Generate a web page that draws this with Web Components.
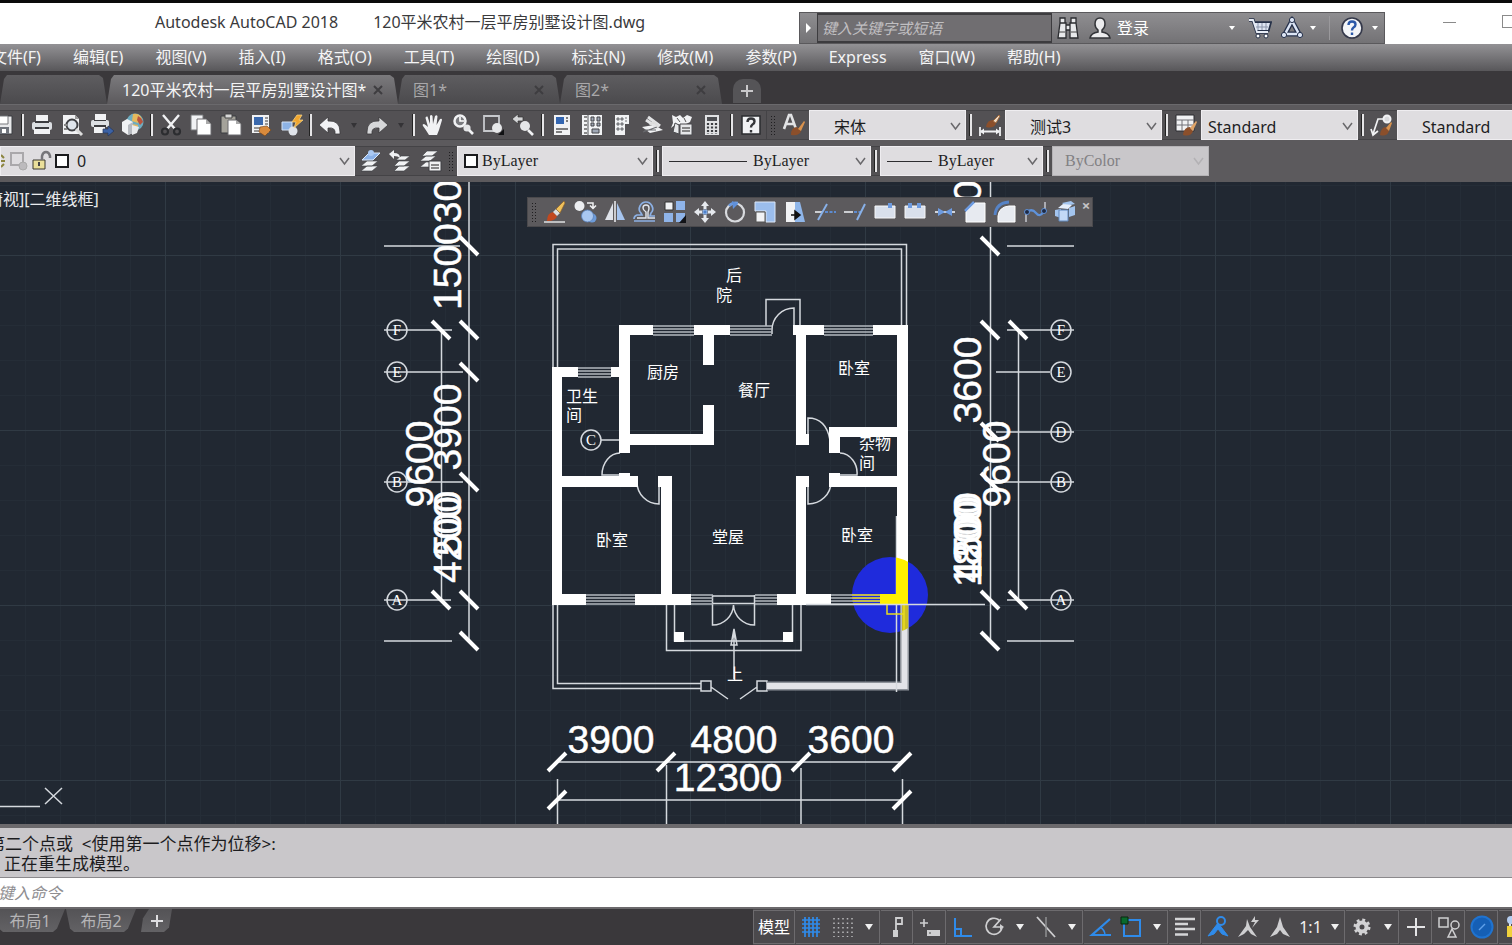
<!DOCTYPE html>
<html lang="zh-CN">
<head>
<meta charset="utf-8">
<title>Autodesk AutoCAD 2018</title>
<style>
  html, body { margin: 0; height: 100%; }
  body { font: 16px/20px "Noto Sans", "Noto Sans CJK SC", sans-serif; background: #5c5a5d; color: #f2f2f2; overflow: hidden; }
  .first style-select { padding-top: 3px; }
</style>
</head>
<body>
<cad-app>
  <title-bar slot="top" product="Autodesk AutoCAD 2018" file="120平米农村一层平房别墅设计图.dwg"></title-bar>
  <menu-bar slot="top" items="文件(F)|编辑(E)|视图(V)|插入(I)|格式(O)|工具(T)|绘图(D)|标注(N)|修改(M)|参数(P)|Express|窗口(W)|帮助(H)"></menu-bar>
  <doc-tabs slot="top"></doc-tabs>
  <tool-row slot="top" class="first">
    <tool-group class="std" tools="save | print preview publish globe | cut copy paste match paint | undo &gt; redo &gt; | hand zoom zoomwin zoomprev | props dcenter palettes sheet markup calc | help"></tool-group>
    <tool-group grip tools="textstyle"></tool-group>
    <style-select label="文字样式" value="宋体" indent="24"></style-select>
    <tool-group tools="| dimstyle"></tool-group>
    <style-select label="标注样式" value="测试3" indent="24"></style-select>
    <tool-group tools="| tablestyle"></tool-group>
    <style-select label="表格样式" value="Standard" indent="6"></style-select>
    <tool-group tools="| leader"></tool-group>
    <style-select label="多重引线样式" value="Standard" indent="24"></style-select>
  </tool-row>
  <tool-row slot="top" class="second">
    <style-select label="图层" value="0" kind="layer" indent="8"></style-select>
    <tool-group tools="layers layerprev layerstate"></tool-group>
    <tool-group grip tools=""></tool-group>
    <style-select label="颜色" value="ByLayer" kind="color" indent="4" serif></style-select>
    <tool-group tools="|"></tool-group>
    <style-select label="线型" value="ByLayer" kind="ltype" indent="6" serif></style-select>
    <tool-group tools="|"></tool-group>
    <style-select label="线宽" value="ByLayer" kind="lweight" indent="6" serif></style-select>
    <tool-group tools="|"></tool-group>
    <style-select label="打印样式" value="ByColor" kind="plot" indent="12" serif off></style-select>
  </tool-row>
  <drawing-canvas>
    <tool-group class="float" grip closable tools="erase duplicate mirror offset array move rotate scale stretch trim extend breakat break join chamfer fillet blend explode"></tool-group>
  </drawing-canvas>
  <command-panel slot="bottom"></command-panel>
  <bottom-bar slot="bottom"></bottom-bar>
</cad-app>

<script>
const W = '#f1f2f4', G = '#c6c8cc', D = '#3b3c40';
const ICONS = {
  save: `<path d="M2 3h19v18H2z" fill="#e8e9eb" stroke="${D}"/><path d="M6 3h11v8H6z" fill="#fff" stroke="#77787c"/><path d="M5 14h13v7H5z" fill="#70747c"/><path d="M11 16h4v4h-4z" fill="#fff"/>`,
  print: `<path d="M6 2h12v7H6z" fill="${W}"/><rect x="2" y="9" width="20" height="8" rx="2" fill="#dcdfe3"/><path d="M5 8h14v2H5zM5 14h14v2H5z" fill="${D}"/><path d="M4 16h16v5H4z" fill="${W}"/>`,
  preview: `<path d="M3 2h12l4 4v15H3z" fill="${W}"/><path d="M15 2v4h4z" fill="#999"/><circle cx="12" cy="12" r="5.500" fill="#dfe5ec" stroke="#3f4044" stroke-width="2"/><path d="M16 16l6 6" stroke="#ddd" stroke-width="3"/><path d="M4 11h3v2H4zM4 15h3v2H4z" fill="#888"/>`,
  publish: `<path d="M5 1h11v6H5z" fill="${W}"/><rect x="1" y="7" width="18" height="7" rx="2" fill="#dcdfe3"/><path d="M4 7h12v1H4zM4 12h12v2H4z" fill="${D}"/><path d="M4 14h11v6H4z" fill="${W}"/><path d="M13 16h5v-3l6 5-6 5v-3h-5z" fill="#3c62a5" stroke="#26365a" stroke-width=".7"/>`,
  globe: `<circle cx="15" cy="9" r="8.500" fill="#6dacc0"/><path d="M13 1q7-1 9 5l-4 4-6-2zM12 11l6 1-1 6-5-1z" fill="#e5b95d"/><path d="M18 3q4 2 5 6l-3 3-3-5z" fill="#b9543e"/><path d="M2 9l5-3 6 3v11l-5 2-6-4z" fill="${W}"/><path d="M8 12l5-3v11l-5 2z" fill="#b7bac0"/><path d="M12 12l7 2-2 6-5 2z" fill="#e9eaec"/>`,
  cut: `<path d="M4 2l12 14M20 2L8 16" stroke="${W}" stroke-width="2.400"/><circle cx="6" cy="18.500" r="3" fill="none" stroke="#2c2d30" stroke-width="2.200"/><circle cx="18" cy="18.500" r="3" fill="none" stroke="#2c2d30" stroke-width="2.200"/>`,
  copy: `<path d="M2 2h12v15H2z" fill="${W}" stroke="#77787b"/><path d="M8 6h9l5 5v11H8z" fill="#fff" stroke="#6a6b6e"/><path d="M17 6v5h5z" fill="#aaa"/>`,
  paste: `<path d="M2 3h15v17H2z" fill="#a4a29a" stroke="${D}"/><path d="M6 1h7v4H6z" fill="#d8d8d8" stroke="#444"/><path d="M9 7h8l5 4v11H9z" fill="#fff" stroke="#6a6b6e"/><path d="M17 7v4h5z" fill="#aaa"/>`,
  match: `<path d="M3 2h17v18H3z" fill="${W}"/><path d="M5 4h9v8H5z" fill="#3b69ad"/><path d="M16 5h3M16 8h3M16 11h3M5 15h7M5 18h5" stroke="#777" stroke-width="1.500"/><path d="M11 14l7-1 4 4-2 2-4 4-6-4z" fill="#d98a3c" stroke="#6f4015" stroke-width=".6"/>`,
  paint: `<path d="M3 9h10v8H3z" fill="#8db3e6" stroke="#d5e3f5"/><circle cx="14" cy="18" r="4.500" fill="#dfe3ea"/><path d="M18 2h5l-3 5h4l-9 8 2-6h-4z" fill="#f0a62f" stroke="#fbd889" stroke-width=".7"/>`,
  undo: `<path d="M10 4v4q12-1 12 11v2h-5q1-7-7-6v5l-9-8z" fill="${W}" stroke="#3c3b3e" stroke-width=".8"/>`,
  redo: `<path d="M14 4v4Q2 7 2 19v2h5q-1-7 7-6v5l9-8z" fill="#d6d7d9" stroke="#3c3b3e" stroke-width=".8"/>`,
  hand: `<path d="M8 22q-3-5-6-9-1-2 1-2 2 1 4 3L4.500 5q0-2 2-1.500L9 11 9 3q1-2 2.500 0L12 11l2-8q2-1.500 2.500.500L15.500 12 19 6q2-1 2 1l-3 10-2 5z" fill="${W}"/>`,
  zoom: `<circle cx="9" cy="8" r="5.500" fill="#7a7b7f" stroke="${W}" stroke-width="2.500"/><path d="M9 4v4h4" stroke="#fff" stroke-width="1.600" fill="none"/><circle cx="16" cy="15" r="3.600" fill="#e4e5e7"/><path d="M18 17l4 4" stroke="${W}" stroke-width="2.600"/>`,
  zoomwin: `<path d="M3 3h15v15H3z" fill="none" stroke="${G}" stroke-width="1.800"/><circle cx="16" cy="15" r="5" fill="#e6e7e9"/><path d="M17 22h6v-6z" fill="#101113"/>`,
  zoomprev: `<path d="M1 6l6-5v3h5v4H7v3z" fill="#d5d6d8" stroke="#333" stroke-width=".7"/><circle cx="14" cy="13" r="5" fill="#e6e7e9"/><path d="M17 17l5 5" stroke="${W}" stroke-width="2.600"/>`,
  props: `<path d="M4 2h16v20H4z" fill="${W}"/><path d="M6 4h8v7H6z" fill="#3466b1"/><path d="M16 5h2M16 8h2M6 16h12M6 19h6" stroke="#555" stroke-width="1.500"/>`,
  dcenter: `<path d="M2 2h20v20H2z" fill="${W}"/><path d="M4 4h3M4 8h3M4 12h3M4 16h3M4 20h3" stroke="#666" stroke-width="1.600"/><path d="M8 2v20" stroke="#55565a"/><g fill="#9fa7b5" stroke="#424347"><path d="M11 4h3v4h-3zM17 4h3v4h-3zM11 10h3v3h-3zM17 10h3v3h-3zM12 16h7v4h-7z"/></g>`,
  palettes: `<path d="M5 2h14v9h-4v11H5z" fill="${W}"/><path d="M15 5h2M15 8h2M7 5h2v2H7zM11 5h2v2h-2zM7 10h2v2H7zM11 10h2v2h-2zM7 15h2v2H7zM11 15h2v2h-2z" stroke="#6f7074" fill="#a9abb0"/>`,
  sheet: `<path d="M2 14l12-2 9 5-13 3z" fill="${W}"/><path d="M6 7l12 8M8 4l12 9" stroke="#e3e4e6" stroke-width="3"/><path d="M3 19l14-5M4 17h12" stroke="#696a6e" stroke-width="1.200"/><path d="M10 12q4-6 8 2" fill="none" stroke="#ddd" stroke-width="2"/>`,
  markup: `<path d="M2 2l4 2 4-2 3 3 4-3 5 2-2 5-6 3-8-1-5 4 2-5z" fill="${W}"/><path d="M5 10l-2 9 6 2v-9zM10 11h12v11H10z" fill="#e6e7e9" stroke="#4a4b4f"/><path d="M12 15h8M12 18h8" stroke="#666" stroke-width="1.500"/><path d="M7 5l3 4M14 5l2 4" stroke="#555"/>`,
  calc: `<path d="M5 2h14v20H5z" fill="#e1e2e4"/><path d="M7 4h10v4H7z" fill="#4d4e52"/><path d="M8 10v11M12 10v11M16 10v11" stroke="#3d3e42" stroke-width="2.200" stroke-dasharray="2 1.500"/>`,
  help: `<path d="M3 3h18v18H3z" fill="${W}" stroke="#2b2c2f" stroke-width="1.500"/><path d="M8.500 9q0-3.500 3.500-3.500t3.500 3q0 2-2 3-1.500 1-1.500 3M12 17v2.500" fill="none" stroke="#35363a" stroke-width="2.400"/>`,
  textstyle: `<path d="M2 16L7 2h2l5 14M4.500 11h8" fill="none" stroke="#e2e3e5" stroke-width="2.600"/><path d="M9 22q0-8 6-8l4 4q-1 5-10 4z" fill="#8b4f2b"/><path d="M16 16l6-8 1 1-4 9z" fill="#d9924d"/>`,
  dimstyle: `<path d="M2 14v9M22 14v9M3 18.500h18" stroke="${W}" stroke-width="1.800"/><path d="M2 18.500l4-3v6zM22 18.500l-4-3v6z" fill="${W}"/><path d="M8 14q1-7 7-7l3 4q-3 5-10 3z" fill="#8b4f2b"/><path d="M15 8l6-6 1 1-4 7z" fill="#f0dcc5" stroke="#a0693c"/>`,
  tablestyle: `<path d="M2 2h18v16H2z" fill="${W}" stroke="#2c2d30"/><path d="M2 7h18M2 12h18M8 7v11M14 7v11" stroke="#707176"/><path d="M9 22q1-8 7-8l3 4q-2 6-10 4z" fill="#8b4f2b"/><path d="M16 15l6-7 1 1-4 9z" fill="#e0a468"/>`,
  leader: `<path d="M13 6L8 6 3 21M1 16l2 6 5-4" fill="none" stroke="${W}" stroke-width="1.700"/><path d="M10 22q1-8 6-8l3 4q-2 6-9 4z" fill="#8b4f2b"/><path d="M16 15l5-6 1 1-3 8z" fill="#d9924d"/><circle cx="17" cy="6" r="3.500" fill="#d9dadd" stroke="${W}" stroke-width="2"/>`,
  layers: `<path d="M3 22h11l6-5H9zM3 17h11l6-5H9z" fill="${W}" stroke="#3e3f43" stroke-width=".6"/><path d="M4 11h11l7-7H11z" fill="#8ab1e8" stroke="#dce9fb"/><circle cx="13" cy="4" r="3" fill="#a9c8f3"/>`,
  layerprev: `<path d="M6 22h10l6-5H11zM6 17h10l6-5H11zM8 11h9l5-4h-9z" fill="${W}" stroke="#3e3f43" stroke-width=".6"/><path d="M1 5l5-4v3q6 0 6 5-2-2-6-2v3z" fill="${W}"/>`,
  layerstate: `<path d="M2 18h9l6-5H8zM2 12h10l6-5H8zM4 7h10l6-5H9z" fill="${W}" stroke="#3e3f43" stroke-width=".6"/><path d="M11 12h12v10H11z" fill="${W}" stroke="#3e3f43"/><path d="M13 16h8M13 19h8" stroke="#666" stroke-width="1.500"/>`,
  erase: `<path d="M1 22h21" stroke="#d8d9db" stroke-width="1.600"/><path d="M4 21q0-8 6-9l4 4q-1 5-10 5z" fill="#c1481f"/><path d="M10 12l3-3 4 4-3 3z" fill="#ddd"/><path d="M13 9l8-8 1 2-5 10z" fill="#f0c15c" stroke="#8b5d20" stroke-width=".6"/>`,
  duplicate: `<circle cx="6.500" cy="6" r="5" fill="#eceef1"/><circle cx="19" cy="18" r="4.500" fill="#6d9bd9"/><circle cx="14.500" cy="16" r="6" fill="#a9c7f0" stroke="#5a83bd" stroke-width=".8"/><path d="M14 3h6v5M17 5.500l3 3 3-3" fill="none" stroke="${W}" stroke-width="1.500"/>`,
  mirror: `<path d="M10 3v17H2z" fill="#dfe3ea"/><path d="M14 3v17h8z" fill="#a7c5ef"/><path d="M12 1v21" stroke="#f1f2f4" stroke-width="1.500"/>`,
  offset: `<path d="M1 21h21M22 16h-5l1-3q3-3 1-7-2-4-6-4T7 6q-2 4 1 7l1 2H4q-3 1-3 4" fill="none" stroke="#8cb0e4" stroke-width="1.700"/><path d="M4 18h9v-6q-3-2-3-4 0-3 3-3t3 3q0 2-1 4v6h7" fill="none" stroke="#e2e7ef" stroke-width="1.400"/>`,
  array: `<path d="M2 2h8v8H2z" fill="${W}" stroke="#333"/><path d="M13 1h9v9h-9zM1 13h9v9H1zM13 13h9v9h-9z" fill="#8fb4e9"/><path d="M16 23h7v-8z" fill="#121317"/>`,
  move: `<path d="M12 1l4 5h-2.500v3h-3V6H8zM12 23l4-5h-2.500v-3h-3v3H8zM1 12l5-4v2.500h3v3H6V16zM23 12l-5-4v2.500h-3v3h3V16z" fill="#e6e9ee"/><path d="M10 10h4v4h-4z" fill="#4f83cd" stroke="#9fc0ee"/>`,
  rotate: `<circle cx="12" cy="12.500" r="9" fill="none" stroke="#d9dbdf" stroke-width="2.200"/><path d="M6 6q3-4 9-3" stroke="#6c9ade" stroke-width="2.500" fill="none"/><path d="M9 1l6 3-5 5z" fill="#5f90da"/>`,
  scale: `<path d="M2 2h20v20H13V11H2z" fill="#9bbdec" stroke="#dbe6f6"/><path d="M3 12h9v10H3z" fill="${W}" stroke="#555"/>`,
  stretch: `<path d="M12 2h5l5 20H12z" fill="#8fb6ea"/><path d="M3 2h9v20H3z" fill="${W}"/><path d="M8 15h7M12 11l5 4-5 4z" fill="#111" stroke="#111" stroke-width="1.500"/>`,
  trim: `<path d="M2 12h7" stroke="#d9dbdf" stroke-width="1.800"/><path d="M12 12h11" stroke="#5d8bd0" stroke-width="1.800" stroke-dasharray="3 1.500"/><path d="M5 20L14 4" stroke="#88b0e8" stroke-width="2"/>`,
  extend: `<path d="M1 12h9" stroke="#d9dbdf" stroke-width="1.800"/><path d="M11 12h7" stroke="#5d8bd0" stroke-width="1.800" stroke-dasharray="3 1.500"/><path d="M14 20l8-16" stroke="#88b0e8" stroke-width="2"/>`,
  breakat: `<path d="M2 6h20v12H2z" fill="#d9e0ec" stroke="#f6f7f9"/><path d="M15 3h4v5h-4z" fill="#6d9be0"/>`,
  break: `<path d="M2 6h20v12H2z" fill="#d9e0ec" stroke="#f6f7f9"/><path d="M5 3h4v5H5zM14 3h4v5h-4z" fill="#6d9be0"/>`,
  join: `<path d="M2 12h20" stroke="#dfe3ea" stroke-width="1.800"/><path d="M5 8l7 4-7 4zM19 8l-7 4 7 4z" fill="#6d9be0"/>`,
  chamfer: `<path d="M3 22V12l9-9h10v19z" fill="#e7eaf0" stroke="#fff"/><path d="M2 11L11 2" stroke="#6d9be0" stroke-width="2.500"/>`,
  fillet: `<path d="M5 22V16q1-9 11-10h6v16z" fill="#e7eaf0" stroke="#fff"/><path d="M2 15Q3 3 16 2" fill="none" stroke="#5683c6" stroke-width="2.800"/>`,
  blend: `<path d="M3 22V13M22 9V2" stroke="#c5c8ce" stroke-width="1.500"/><path d="M4 12q5-4 9 1t8-2" fill="none" stroke="#5f92da" stroke-width="2.200"/><circle cx="4" cy="12" r="2.500" fill="#1f2a44" stroke="#5f92da"/><circle cx="21" cy="11" r="2.500" fill="#1f2a44" stroke="#5f92da"/>`,
  explode: `<path d="M2 10l6-1v9l-6-2zM16 8l6-2v9l-6 2zM9 3l9-2 4 3-9 2z" fill="#a3c4ee"/><path d="M6 10h9v11H6z" fill="#c3d9f6" stroke="#6189bf"/><path d="M5 8l5-4 9 1-4 4z" fill="#e5eefb"/>`,
  binoculars: `<g fill="#e8e9eb" stroke="#2b2c30" stroke-width="1.300"><path d="M2 22l2-15h6v15zM14 22V7h6l2 15zM4 2h5v5H4zM15 2h5v5h-5zM10 9h4v5h-4z"/></g><path d="M3 16h6M15 16h6" stroke="#444"/>`,
  person: `<path d="M12 2q5 0 5 6 0 4-3 6v2q7 1 8 6H2q1-5 8-6v-2q-3-2-3-6 0-6 5-6z" fill="#ececee" stroke="#333438" stroke-width="1.500"/>`,
  cart: `<path d="M1 4h4l4 12h11M6 7h16l-2 7H9" fill="none" stroke="#273249" stroke-width="3.500"/><path d="M6 7h16l-2 7H9z" fill="#dfe6f3"/><path d="M1 4h4l4 12h11" fill="none" stroke="#e8edf6" stroke-width="1.800"/><path d="M10 7v7M14 7v7M18 7v7M8 11h12" stroke="#8b95aa"/><circle cx="10" cy="20" r="2" fill="#fff" stroke="#273249"/><circle cx="18" cy="20" r="2" fill="#fff" stroke="#273249"/>`,
  cloud: `<path d="M12 5L5 18h14z" fill="none" stroke="#26314b" stroke-width="5"/><path d="M12 5L5 18h14z" fill="none" stroke="#dce5f5" stroke-width="2.500"/><circle cx="12" cy="4" r="2.600" fill="#dce5f5" stroke="#26314b"/><circle cx="4" cy="19" r="2.600" fill="#dce5f5" stroke="#26314b"/><circle cx="20" cy="19" r="2.600" fill="#dce5f5" stroke="#26314b"/>`,
  question: `<circle cx="12" cy="12" r="10" fill="#f3f5f8" stroke="#34384a" stroke-width="1.600"/><path d="M8.500 9q0-3.500 3.500-3.500t3.500 3q0 2-2 3-1.500 1-1.500 3M12 16.500v2.500" fill="none" stroke="#2b58a8" stroke-width="2.400"/>`,
  sgrid: `<path d="M5 2v20M9 2v20M13 2v20M17 2v20M2 5h18M2 9h18M2 13h18M2 17h18" stroke="#2f8bea" stroke-width="1.700"/>`,
  ssnap: `<path d="M3 3v19M7.500 3v19M12 3v19M16.500 3v19M21 3v19" stroke="#b9b9bb" stroke-width="1.500" stroke-dasharray="1.500 3"/>`,
  sinfer: `<path d="M11 20V3h6v6h-6" fill="none" stroke="#cfcfd1" stroke-width="1.800"/><path d="M8 15h5v7H8z" fill="#cfcfd1"/>`,
  sdyn: `<path d="M2 8h8M6 4v8" stroke="#cfcfd1" stroke-width="1.600"/><path d="M9 15h13v6H9z" fill="#cfcfd1"/><path d="M12 17v2" stroke="#444"/>`,
  sortho: `<path d="M4 3v18h17M4 14h6v7" fill="none" stroke="#2f8bea" stroke-width="2"/>`,
  spolar: `<path d="M17 5a8 8 0 1 0 3 7H12l7-8" fill="none" stroke="#cfcfd1" stroke-width="1.700"/><path d="M18 9l4 3-4 3z" fill="#cfcfd1"/>`,
  siso: `<path d="M3 2l18 20" stroke="#cfcfd1" stroke-width="1.800"/><path d="M12 2v20" stroke="#8f9092" stroke-width="1.500"/>`,
  strack: `<path d="M22 4L4 20h19" fill="none" stroke="#2f8bea" stroke-width="2.200"/><path d="M12 12q5 3 5 8" stroke="#2f8bea" fill="none" stroke-width="1.500"/>`,
  sosnap: `<path d="M5 5h16v16H5z" fill="none" stroke="#2f8bea" stroke-width="2"/><path d="M2 2h7v7H2z" fill="#0a6a2c" stroke="#06280f"/>`,
  sweight: `<path d="M2 4h20M2 9h13M2 14h20M2 19.500h13" stroke="#d5d5d7" stroke-width="2.400"/>`,
  sann1: `<path d="M12 8l10 13-6-2-4-5-4 5-6 2z" fill="#2f8bea" stroke="#2f8bea"/><circle cx="15" cy="6" r="4" fill="none" stroke="#2f8bea" stroke-width="2"/>`,
  sann2: `<path d="M10 4l3 8 7 10-6-3-3-4-4 4-6 3 8-11z" fill="#cfcfd1"/><path d="M18 1l-4 6h4l-3 6 7-8h-4z" fill="#cfcfd1"/>`,
  sann3: `<path d="M12 2l3 10 7 10-7-3-3-4-3 4-7 3 7-10z" fill="#cfcfd1"/>`,
  sgear: `<circle cx="12" cy="12" r="4.500" fill="none" stroke="#d2d2d4" stroke-width="4"/><circle cx="12" cy="12" r="7" fill="none" stroke="#d2d2d4" stroke-width="3" stroke-dasharray="2.800 2.700"/>`,
  splus: `<path d="M12 3v18M3 12h18" stroke="#e4e4e6" stroke-width="2"/>`,
  sshapes: `<path d="M2 3h9v9H2zM11 22l4-8 4 8z" fill="none" stroke="#cfcfd1" stroke-width="1.500"/><circle cx="18" cy="10" r="4" fill="none" stroke="#cfcfd1" stroke-width="1.500"/>`,
  scirc: `<circle cx="12" cy="12" r="10.500" fill="#155fb5" stroke="#1f73d0" stroke-width="2"/><path d="M9 15l6-6" stroke="#5fa0ea" stroke-width="1.500"/>`,
  syellow: `<path d="M4 11h18v11H4z" fill="#f1d13b"/><path d="M7 11V6q5-6 9 0" fill="none" stroke="#e6e6e6" stroke-width="2"/><circle cx="8" cy="5" r="4" fill="#b5cdf0"/>`
};

function define(name, css, render) {
  customElements.define(name, class extends HTMLElement {
    constructor() { super(); this.attachShadow({ mode: 'open' }); }
    connectedCallback() {
      if (this.shadowRoot.childNodes.length) return;
      this.shadowRoot.innerHTML = `<style>:host,*{box-sizing:border-box}${css}</style>${render(this)}`;
    }
  });
}
const icon = n => `<cad-icon name="${n}"></cad-icon>`;

define('cad-icon', `:host{display:block;width:24px;height:24px;flex:none;pointer-events:none}svg{display:block;width:100%;height:100%}`,
  el => `<svg viewBox="0 0 24 24" aria-hidden="true">${ICONS[el.getAttribute('name')]}</svg>`);

define('cad-app', `
  :host{display:flex;flex-direction:column;height:100vh;min-height:480px;overflow:hidden;background:#5c5a5d}
  main{flex:1;min-height:0;display:flex}
  ::slotted(drawing-canvas){flex:1}`,
  () => `<slot name="top"></slot><main><slot></slot></main><slot name="bottom"></slot>`);

define('title-bar', `
  :host{display:flex;flex:none;height:44px;background:#fff;border-top:3px solid #0b0a0b;color:#3a3a3c;padding-left:155px;overflow:hidden}
  h1{font:inherit;margin:0;display:flex;gap:35px;white-space:nowrap;padding-top:9px}
  .info{margin:9px 0 0 auto;display:flex;align-items:center;width:586px;flex:none;height:32px;background:linear-gradient(#8f8e91,#737275);border:1px solid #5a595c;color:#fff}
  button{appearance:none;background:none;border:0;padding:0;font:inherit;color:inherit;display:flex;align-items:center}
  .tri{width:0;height:0;border:5px solid transparent;border-left-color:#fff;border-right:0;margin:0 6px}
  .dd{width:0;height:0;border:3px solid transparent;border-top:4px solid #fff;border-bottom:0}
  input{width:235px;height:30px;border:1px solid #3d3c3f;border-width:2px 1px;background:#706e71;font:italic 15px/20px "Noto Sans","Noto Sans CJK SC",sans-serif;padding:0 4px;color:#fff}
  input::placeholder{color:#c0bfc1;opacity:1}
  .win{width:127px;flex:none;display:flex;justify-content:flex-end;padding-top:12px}
  .min{width:13px;height:8px;border-bottom:1px solid #8a8a8a;margin-right:46px}
  .max{width:13px;height:13px;border:1px solid #8a8a8a;margin-right:-3px}`,
  el => `<h1><span>${el.getAttribute('product')}</span><span>${el.getAttribute('file')}</span></h1>
  <div class="info"><button aria-label="收拢"><span class="tri"></span></button><input aria-label="搜索" placeholder="键入关键字或短语">
   <button aria-label="搜索" style="margin-left:4px">${icon('binoculars')}</button>
   <button style="margin-left:8px;gap:5px;width:147px">${icon('person')}<span>登录</span><span class="dd" style="margin-left:auto"></span></button>
   <button aria-label="商店" style="margin-left:13px">${icon('cart')}</button>
   <button aria-label="A360" style="margin-left:8px;gap:6px;padding-right:13px;border-right:1px solid #9a999c">${icon('cloud')}<span class="dd"></span></button>
   <button aria-label="帮助" style="margin-left:10px;gap:8px">${icon('question')}<span class="dd"></span></button></div>
  <div class="win"><button class="min" aria-label="最小化"></button><button class="max" aria-label="最大化"></button></div>`);

define('menu-bar', `
  :host{display:block;flex:none;height:27px;background:linear-gradient(#939295,#58575a);overflow:hidden}
  nav{display:flex;gap:32px;margin-left:-9px;white-space:nowrap}
  a{color:#f4f4f5;text-decoration:none;line-height:27px;flex:none}`,
  el => `<nav>${el.getAttribute('items').split('|').map(t => `<a href="#">${t}</a>`).join('')}</nav>`);

define('doc-tabs', `
  :host{display:flex;flex:none;height:33px;background:#3a383b;padding-top:4px;overflow:hidden}
  button{appearance:none;border:0;font:inherit;color:#a9a8aa;background:linear-gradient(#5e5d60,#4b4a4d);height:29px;display:flex;align-items:center;text-align:left;padding:0 15px 0 15px;flex:none;width:162px;clip-path:polygon(7px 0,calc(100% - 8px) 0,calc(100% - 4px) 3px,100% 100%,0 100%,4px 4px)}
  .blank{width:107px}
  .on{width:291px;color:#f4f4f5;background:linear-gradient(#7b7a7d,#5c5a5d);padding-right:14px}
  svg{width:12px;height:12px;margin-left:auto;flex:none}
  span{white-space:nowrap}
  .plus{width:28px;height:24px;margin:4px 0 0 11px;padding:0 8px;border-radius:10px 10px 0 0;background:#555457;clip-path:none}
  .plus svg{margin:0}`,
  () => { const x = '<svg viewBox="0 0 12 12"><path d="M2 2l8 8M10 2l-8 8" stroke="#3e3d40" stroke-width="2"/></svg>';
    return `<button class="blank" aria-label="开始"></button><button class="on"><span>120平米农村一层平房别墅设计图*</span>${x}</button>
    <button><span>图1*</span>${x}</button><button><span>图2*</span>${x}</button>
    <button class="plus" aria-label="新图形"><svg viewBox="0 0 12 12"><path d="M6 0v12M0 6h12" stroke="#c9c8ca" stroke-width="2"/></svg></button>`; });

define('tool-row', `
  :host{display:flex;flex:none;align-items:stretch;overflow:hidden;height:36px;padding:5px 0 0;background:#5c5a5d;border-top:1px solid #6a696c}
  :host(.second){height:42px;padding:5px 0 6px;border-top-color:#5c5a5d}`,
  () => `<slot></slot>`);

define('tool-group', `
  :host{display:flex;flex:none;align-items:center;background:#535154;border:solid #444346;border-width:1px 0}
  :host(.std){margin-left:-12px;border-right-width:1px}
  :host(.float){position:absolute;left:calc(50% - 229px);top:15px;height:30px;background:#5c5a5d;border:1px solid #4a494c}
  .grip{width:5px;height:20px;margin:0 4px 0 3px;background:radial-gradient(circle,#1f1e20 1px,transparent 1px) 0 0/3px 3px}
  button{appearance:none;background:none;border:0;padding:0;width:30px;height:26px;display:grid;place-items:center;flex:none}
  :host(.std) .dd{width:17px}
  .dd i{border:3px solid transparent;border-top:5px solid #343336;border-bottom:0}
  .sep{width:9px;height:24px;display:grid;place-items:center}
  .sep i{width:3px;height:22px;background:#e6e5e7;border-left:1px solid #222;}
  .close{width:12px;align-self:start;font:700 15px/14px "Noto Sans",sans-serif;color:#c4c4c6;height:14px}`,
  el => (el.hasAttribute('grip') ? '<span class="grip"></span>' : '') +
    el.getAttribute('tools').split(/\s+/).filter(Boolean).map(t => t === '|' ? '<span class="sep"><i></i></span>'
      : t === '>' ? '<button class="dd" aria-label="更多"><i></i></button>'
      : `<button aria-label="${t}">${icon(t)}</button>`).join('') +
    (el.hasAttribute('closable') ? '<button class="close" aria-label="关闭">×</button>' : ''));

define('style-select', `
  :host{display:flex;flex:none;align-items:center;width:157px;background:#dfdde0;border:1px solid #efedf0;position:relative;color:#1d1d1f;overflow:hidden}
  :host([kind=layer]){width:355px}
  :host([kind=color]){width:196px}
  :host([kind=ltype]){width:209px}
  :host([kind=lweight]){width:163px}
  :host([off]){background:#c9c7ca;border-color:#b5b3b6;color:#828184}
  select{appearance:none;flex:1;min-width:0;height:100%;border:0;background:none;color:inherit;opacity:1;font:16px/20px "Noto Sans","Noto Sans CJK SC",sans-serif;padding:0 20px 0 var(--in)}
  :host([serif]) select{font-family:"Liberation Serif","Noto Sans CJK SC",serif}
  .chev{width:11px;height:9px;margin:0 4px 0 -15px;flex:none;pointer-events:none}
  .sw{width:14px;height:14px;border:2px solid #1b1b1d;background:#fff;flex:none}
  .ln{height:1px;background:#2d2d2f;flex:none;margin-left:6px}
  .pre{display:flex;flex:none}`,
  el => { const k = el.getAttribute('kind');
    const pre = { layer: `<svg class="pre" width="54" height="24" viewBox="0 0 54 24"><path d="M-4 12h8M0 6l3 3M0 18l3-3" stroke="#8c8540" stroke-width="2"/><path d="M10 4h12v12H10z" fill="none" stroke="#aaa8ab" stroke-width="2"/><circle cx="22" cy="17" r="4" fill="#bcbabd" stroke="#aaa"/><path d="M32 11h12v9H32z" fill="#eadf9a" stroke="#3b3830"/><path d="M41 11V7q1-4 4-4t4 4v2" fill="none" stroke="#77767a" stroke-width="2.500"/><path d="M38 13v4" stroke="#444" stroke-width="2"/></svg><span class="sw"></span>`,
      color: '<span class="sw" style="margin-left:6px"></span>', ltype: '<span class="ln" style="width:78px"></span>', lweight: '<span class="ln" style="width:45px"></span>' }[k] || '';
    return `${pre}<select style="--in:${el.getAttribute('indent')}px" aria-label="${el.getAttribute('label')}"${el.hasAttribute('off') ? ' disabled' : ''}><option>${el.getAttribute('value')}</option></select>
    <svg class="chev" viewBox="0 0 11 9"><path d="M1 1l4.500 6L10 1" fill="none" stroke="${k === 'plot' ? '#b3b1b4' : '#69686b'}" stroke-width="1.500"/></svg>`; });

const tick = (pts, d) => pts.map(([x, y]) => `M${x - 9} ${y - 9 * d}L${x + 9} ${y + 9 * d}`).join('');
const bubble = (x, y, t) => `<circle cx="${x}" cy="${y}" r="10"/><text x="${x}" y="${y + 5}" class="b">${t}</text>`;
const room = (x, y, t) => `<text x="${x}" y="${y + 6}" class="r">${t}</text>`;
const dim = (x, y, t, a = 'middle') => `<text class="d" text-anchor="${a}" transform="translate(${x} ${y}) rotate(-90)">${t}</text>`;
const win = (x, y, w) => `<path d="M${x} ${y + 1}h${w}M${x} ${y + 4}h${w}M${x} ${y + 7}h${w}M${x} ${y + 10}h${w}"/>`;
const WALLS = 'M619 325h34v10h-34zM694 325h36v10h-36zM793 325h31v10h-31zM873 325h35v10h-35zM619 325h11v128h-11zM552 367h26v10h-26zM611 367h19v10h-19zM552 367h10v238h-10zM630 434h84v11h-84zM703 335h11v30h-11zM703 405h11v40h-11zM796 325h10v120h-10zM796 434h13v11h-13zM897 325h11v280h-11zM829 427h70v10h-70zM829 427h11v26h-11zM562 476h76v11h-76zM619 473h11v5h-11zM829 476h70v11h-70zM829 473h11v5h-11zM661 476h11v129h-11zM658 476h14v11h-14zM796 476h10v129h-10zM796 476h13v11h-13zM552 594h34v11h-34zM635 594h56v11h-56zM777 594h54v11h-54zM880 594h28v11h-28zM674 632h10v10h-10zM783 632h10v10h-10z';

define('drawing-canvas', `
  :host{display:block;position:relative;overflow:hidden;background:#212832;color:#e8eaed}
  svg{position:absolute;inset:0;width:100%;height:100%}
  .t{fill:none;stroke:#d5d9de;stroke-width:1.500}
  .w{fill:#fff}.k{fill:none;stroke:#fff;stroke-width:4}
  .n{fill:none;stroke:#b3b8bf;stroke-width:1.500}
  text{fill:#fff;stroke:none}
  .r{font:16px "Noto Sans CJK SC",sans-serif;text-anchor:middle}
  .b{font:15px "Liberation Serif",serif;text-anchor:middle}
  .d{font:39px "Liberation Sans",sans-serif;stroke:#fff;stroke-width:.5}
  .view{position:absolute;left:-13px;top:7px;white-space:nowrap}`,
  () => `<svg viewBox="0 182 1512 642" preserveAspectRatio="xMidYMid slice" role="img" aria-label="一层平面图">
  <defs><pattern id="g" width="35" height="35" x="25" y="220" patternUnits="userSpaceOnUse"><path d="M.5 0v35M0 .5h35" stroke="#252d37" fill="none"/></pattern>
  <pattern id="m" width="175" height="175" x="165" y="255" patternUnits="userSpaceOnUse"><path d="M.5 0v175M0 .5h175" stroke="#303a44" fill="none"/></pattern>
  <clipPath id="c"><circle cx="890" cy="595" r="38"/></clipPath></defs>
  <rect y="182" width="1512" height="642" fill="url(#g)"/><rect y="182" width="1512" height="642" fill="url(#m)"/>
  <circle cx="890" cy="595" r="38" fill="#1f2bdc"/>
  <g class="t">
   <path d="M553 367V244.500H906.500V325M557.500 367V249H901.500V325M553 605V688.500H701M557.500 605V683.500H701"/>
   <path d="M766 326V299.500H800V326M772 334V330A22 22 0 0 1 794 308V326M620 453A18 22 0 0 0 602 475H620M637 482A22 22 0 0 0 659 504V487M831 482A23 22 0 0 1 808 504V487M840 453A18 20 0 0 1 857 475H840M808 436V418Q826 418 830 440"/>
   <path d="M666.500 605V650.500H801V605M674.500 605V641H792.500V605M712.500 595V625A21 21 0 0 0 733.500 605A21 21 0 0 0 754.500 625V595M712 596H755M712 603.500H755"/>
   <path d="M734 629L731 645H737ZM734 629V679M701 681h10v10h-10zM757 681h10v10h-10zM711 687L728 699M757 687L740 699M601 440H619"/>
   <circle cx="591" cy="440" r="10"/><text x="591" y="445" class="b">C</text>
  </g>
  <path d="M767 686H904.500V605" fill="none" stroke="#8d9299" stroke-width="9"/><path d="M767 686H904.500V605" fill="none" stroke="#e3e4e8" stroke-width="6"/>
  <path class="t" d="M896.500 516V692"/>
  <g class="n">${win(653, 325, 41)}${win(730, 325, 42)}${win(824, 325, 49)}${win(578, 367, 33)}${win(586, 594, 49)}${win(691, 594, 22)}${win(755, 594, 22)}${win(831, 594, 49)}</g>
  <path d="${WALLS}" class="w"/>
  <g clip-path="url(#c)"><path d="M896 550h12v55h-28v-11h16z" fill="#fff000"/><path d="M902 605h6v30h-6z" fill="#c9bd22"/><path d="M850 595h30M850 598h30M850 601h30M850 604h30" stroke="#cfc32b" stroke-width="1.500"/><path d="M887 605v9h17M904 605v25" fill="none" stroke="#e8dc20" stroke-width="1.500"/></g>
  <path class="t" d="M806 604.500H985"/>
  <g class="t">
   <path d="M469 182V641M441.500 330V600M384 246H460M384 330H452M384 372H463M384 482H463M384 600H451M384 641H452"/>
   <path d="M990.500 182V641M1018.500 330V600M1007 246H1074M1007 330H1074M996 372H1050M996 432H1074M996 482H1074M1007 600H1074M1007 641H1074"/>
   <path d="M557 762H902M557 800H902M557.500 779V824M666.500 765V824M801 768V824M902.500 779V824M0 806.500H40M45 788L62 804M62 788L45 804"/>
   ${bubble(397, 330, 'F')}${bubble(397, 372, 'E')}${bubble(397, 482, 'B')}${bubble(397, 600, 'A')}
   ${bubble(1061, 330, 'F')}${bubble(1061, 372, 'E')}${bubble(1061, 432, 'D')}${bubble(1061, 482, 'B')}${bubble(1061, 600, 'A')}
  </g>
  <path class="k" d="${tick([[469,246],[469,330],[469,372],[469,482],[469,600],[469,641],[441,330],[441,600],[990,246],[990,330],[990,432],[990,482],[990,600],[990,641],[1018,330],[1018,600]], 1)}${tick([[557,762],[666,762],[801,762],[902,762],[557,800],[902,800]], -1)}"/>
  ${dim(461, 310, '150030', 'start')}${dim(461, 427, '3900')}${dim(433, 464, '9600')}${dim(461, 583, '4200', 'start')}${dim(461, 556, '500', 'start')}
  ${dim(981, 202, '0', 'start')}${dim(981, 380, '3600')}${dim(1010, 464, '9600')}${dim(981, 583, '4200', 'start')}${dim(981, 587, '1800', 'start')}${dim(981, 579, '1500', 'start')}
  <g text-anchor="middle"><text class="d" x="611" y="753">3900</text><text class="d" x="734" y="753">4800</text><text class="d" x="851" y="753">3600</text><text class="d" x="728" y="791">12300</text></g>
  ${room(734, 275, '后')}${room(724, 295, '院')}${room(663, 372, '厨房')}${room(754, 390, '餐厅')}${room(854, 368, '卧室')}${room(582, 396, '卫生')}${room(574, 415, '间')}${room(875, 443, '杂物')}${room(867, 463, '间')}${room(612, 540, '卧室')}${room(728, 537, '堂屋')}${room(857, 535, '卧室')}${room(735, 674, '上')}
  </svg><span class="view">俯视][二维线框]</span><slot></slot>`);

define('command-panel', `
  :host{display:block;flex:none;border-top:4px solid #6b696c}
  .log{height:50px;background:#c9c7ca;color:#1c1c1e;font-size:17px;line-height:20px;padding:6px 0 0;border-bottom:1px solid #8b898c;overflow:hidden;white-space:pre}
  p{margin:0 0 0 -12px}p+p{margin-left:4px}
  input{display:block;width:100%;height:29px;border:0;background:#fff;font:italic 16px/20px "Noto Sans","Noto Sans CJK SC",sans-serif;padding:0;text-indent:-2px;color:#333}
  input::placeholder{color:#8f8e91;opacity:1}`,
  () => `<div class="log"><p>第二个点或  &lt;使用第一个点作为位移&gt;:</p><p>正在重生成模型。</p></div><input aria-label="命令" placeholder="键入命令">`);

define('bottom-bar', `
  :host{display:flex;flex:none;height:38px;background:#3a383b;border-top:2px solid #6b696c;overflow:hidden}
  button{appearance:none;border:0;background:none;padding:0;font:inherit;color:inherit;flex:none;display:grid;place-items:center}
  .tabs{display:flex;align-items:start;flex:1;color:#b5b4b6}
  .tab{height:23px;width:70px;margin-right:1px;background:linear-gradient(#545356,#636265);clip-path:polygon(0 0,100% 0,calc(100% - 8px) 85%,calc(100% - 12px) 100%,8px 100%,4px 85%)}
  .tab:first-child{margin-left:-5px}
  .add{width:31px;margin-left:4px;clip-path:polygon(8px 0,100% 0,calc(100% - 3px) 80%,calc(100% - 8px) 100%,0 100%,2px 40%)}
  .st{display:flex;gap:1px;flex:none;background:#4b494c;padding:1px 0 0;margin-right:-19px}
  .cell{display:flex;align-items:center;border:1px solid #6d6b6e;border-left-width:0;height:34px}
  .cell:first-child{border-left-width:1px}
  .cell button{height:32px;width:31px}
  .cell .dd{width:21px}
  .dd i{border:4px solid transparent;border-top:6px solid #f0f0f0;border-bottom:0}
  .cell .model{width:40px;color:#fff}`,
  () => { const b = n => `<button aria-label="${n}">${icon(n)}</button>`, d = '<button class="dd" aria-label="选项"><i></i></button>';
    const c = (...a) => `<div class="cell">${a.join('')}</div>`;
    return `<div class="tabs"><button class="tab">布局1</button><button class="tab">布局2</button><button class="tab add" aria-label="新布局"><svg width="12" height="12"><path d="M6 0v12M0 6h12" stroke="#dedee0" stroke-width="2"/></svg></button></div>
    <div class="st">${c('<button class="model">模型</button>')}${c(b('sgrid'), b('ssnap'), d)}${c(b('sinfer'))}${c(b('sdyn'))}${c(b('sortho'), b('spolar'), d, b('siso'), d)}${c(b('strack'), b('sosnap'), d)}${c(b('sweight'))}${c(b('sann1'), b('sann2'), b('sann3'), '<button>1:1</button>', '<button class="dd" aria-label="比例" style="width:18px"><i></i></button>')}${c(b('sgear'), d)}${c(b('splus'))}${c(b('sshapes'))}${c(b('scirc'))}${c(b('syellow'))}</div>`; });
</script>
</body>
</html>
